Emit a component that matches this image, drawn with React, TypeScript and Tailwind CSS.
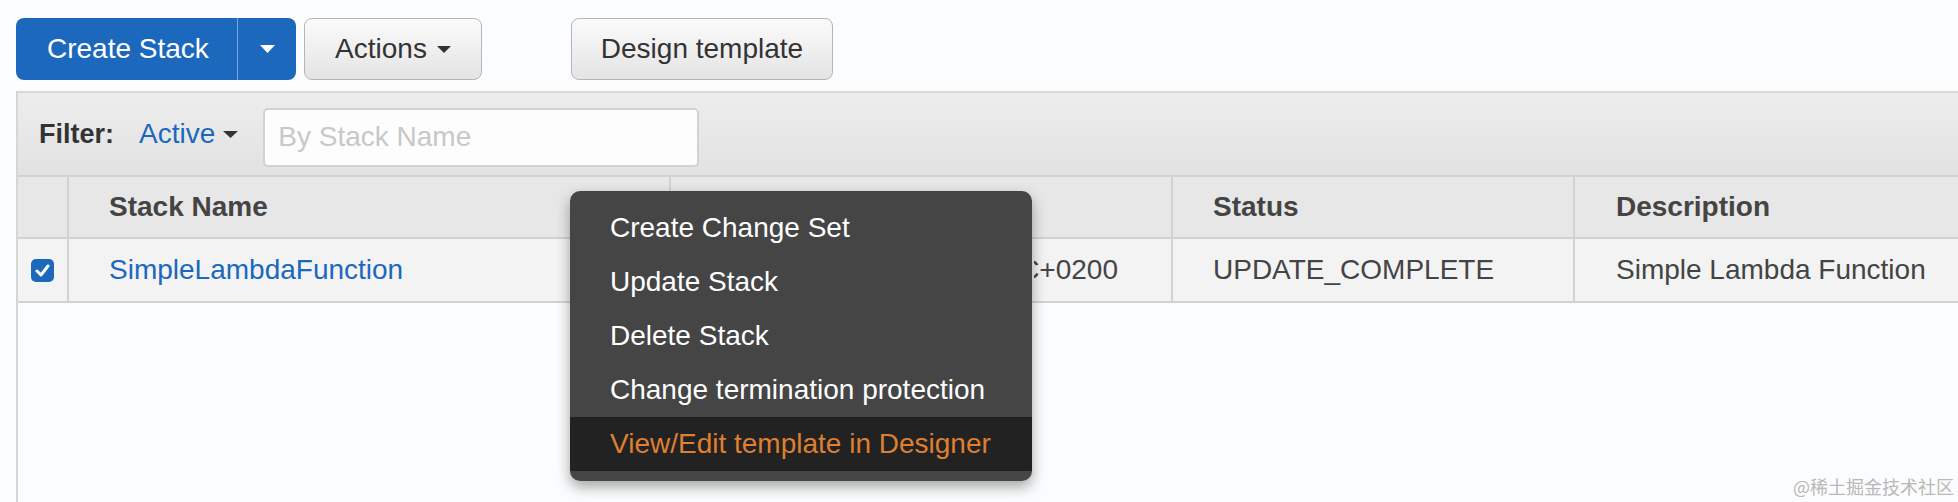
import React from "react";

const Caret = ({ color, w = 15, h = 8 }: { color: string; w?: number; h?: number }) => (
  <svg width={w} height={h} viewBox={`0 0 ${w} ${h}`} className="block">
    <polygon points={`0,0 ${w},0 ${w / 2},${h}`} fill={color} />
  </svg>
);

const menuItems = [
  "Create Change Set",
  "Update Stack",
  "Delete Stack",
  "Change termination protection",
];

export default function App() {
  return (
    <div className="relative w-[1958px] h-[502px] overflow-hidden bg-[#fbfcfd] font-['Liberation_Sans',Arial,sans-serif] text-[28px] text-[#444]">
      {/* Toolbar */}
      <div className="flex items-start pt-[18px] pl-4">
        <div className="flex h-[62px] w-[280px] rounded-[8px] bg-[#1b68bd] text-white">
          <div className="flex w-[221px] items-center pl-[31px]">Create Stack</div>
          <div className="w-px bg-[#7aa5d8]" />
          <div className="flex flex-1 items-center justify-center">
            <Caret color="#ffffff" />
          </div>
        </div>
        <div className="ml-2 flex h-[62px] w-[178px] items-center justify-center gap-[10px] rounded-[8px] border border-[#b5b5b5] bg-gradient-to-b from-[#fbfbfb] to-[#e4e4e4] text-[#333]">
          <span>Actions</span>
          <Caret color="#333333" w={14} h={7} />
        </div>
        <div className="ml-[89px] flex h-[62px] w-[262px] items-center justify-center rounded-[8px] border border-[#b5b5b5] bg-gradient-to-b from-[#fbfbfb] to-[#e4e4e4] text-[#333]">
          Design template
        </div>
      </div>

      {/* Table container */}
      <div className="ml-4 mt-[11px] h-[420px] border-l-2 border-[#d6d6d6]">
        {/* Filter bar */}
        <div className="flex h-[84px] items-center border-t-2 border-[#d8d8d8] bg-gradient-to-b from-[#ededed] to-[#e2e2e2]">
          <span className="ml-[21px] text-[27px] font-bold text-[#333]">Filter:</span>
          <span className="ml-[25px] text-[#1b68bd]">Active</span>
          <span className="ml-[8px]">
            <Caret color="#333333" w={15} h={7} />
          </span>
          <div className="ml-[25px] mt-[6px] flex h-[59px] w-[436px] items-center rounded-[5px] border-2 border-[#d2d2d2] bg-[#fdfdfd] pl-[13px] text-[#c8c8c8]">
            By Stack Name
          </div>
        </div>

        {/* Header row */}
        <div className="grid h-[64px] grid-cols-[49px_602px_502px_402px_1fr] border-b-2 border-t-2 border-[#d2d2d2] bg-[#e7e7e7] font-bold">
          <div />
          <div className="flex items-center border-l-2 border-[#d2d2d2] pl-[40px]">Stack Name</div>
          <div className="border-l-2 border-[#d2d2d2]" />
          <div className="flex items-center border-l-2 border-[#d2d2d2] pl-[40px]">Status</div>
          <div className="flex items-center border-l-2 border-[#d2d2d2] pl-[41px]">Description</div>
        </div>

        {/* Data row */}
        <div className="grid h-[64px] grid-cols-[49px_602px_502px_402px_1fr] border-b-2 border-[#d2d2d2] bg-[#f3f3f3]">
          <div className="flex items-center justify-center">
            <div className="flex h-[23px] w-[23px] items-center justify-center rounded-[5px] bg-[#1b68bd]">
              <svg width="15" height="13" viewBox="0 0 15 13">
                <path d="M2 7 L6 11 L13 2" stroke="#ffffff" strokeWidth="3" fill="none" strokeLinecap="round" strokeLinejoin="round" />
              </svg>
            </div>
          </div>
          <div className="flex items-center border-l-2 border-[#d2d2d2] pl-[40px] text-[#1b68bd]">SimpleLambdaFunction</div>
          <div className="flex items-center justify-end border-l-2 border-[#d2d2d2] pr-[53px]">
            <div className="flex w-[84px] justify-end overflow-hidden whitespace-nowrap">C+0200</div>
          </div>
          <div className="flex items-center border-l-2 border-[#d2d2d2] pl-[40px]">UPDATE_COMPLETE</div>
          <div className="flex items-center border-l-2 border-[#d2d2d2] pl-[41px]">Simple Lambda Function</div>
        </div>
      </div>

      {/* Context menu */}
      <div className="absolute left-[570px] top-[191px] w-[462px] rounded-[10px] bg-[#454545] py-[10px] text-white shadow-[0_6px_14px_rgba(0,0,0,0.35)]">
        {menuItems.map((item) => (
          <div key={item} className="flex h-[54px] items-center pl-[40px]">
            {item}
          </div>
        ))}
        <div className="flex h-[54px] items-center bg-[#222222] pl-[40px] text-[#de7f31]">
          View/Edit template in Designer
        </div>
      </div>

      {/* Watermark */}
      <div className="absolute left-[1793px] top-[474px] font-['Noto_Sans_CJK_SC',sans-serif] text-[18px] leading-[24px] text-[#b8b8b8]">
        @稀土掘金技术社区
      </div>
    </div>
  );
}
